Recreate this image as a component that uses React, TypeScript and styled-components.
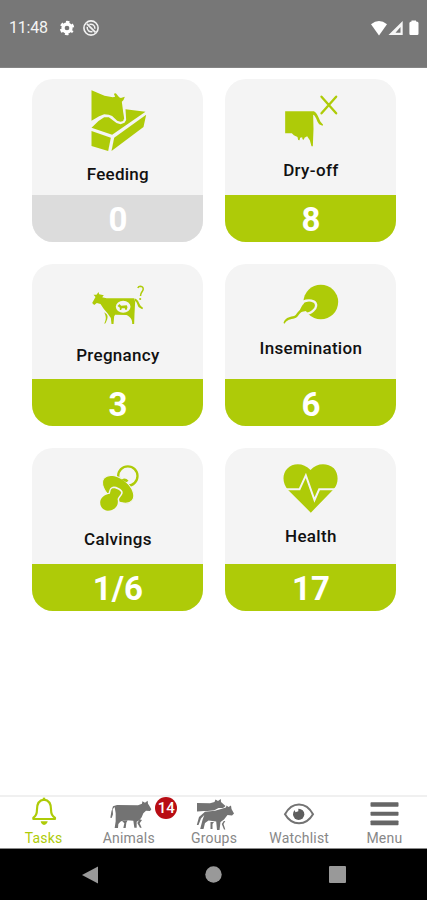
import React from "react";
import styled, { createGlobalStyle } from "styled-components";

const LIME = "#aecb08";
const GREY = "#737373";

const GlobalStyle = createGlobalStyle`
  * { box-sizing: border-box; }
  body { margin: 0; background: #fff; font-family: Roboto, "Liberation Sans", sans-serif; }
`;

const Screen = styled.div`
  display: flex;
  flex-direction: column;
  width: 427px;
  height: 900px;
  overflow: hidden;
  background: #fff;
`;

const StatusBar = styled.header`
  display: flex;
  align-items: flex-start;
  justify-content: space-between;
  height: 68px;
  padding: 19px 7px 0 9px;
  background: #777;
  border-bottom: 1px solid #858585;
  color: #fff;
`;

const StatusGroup = styled.div`
  display: flex;
  align-items: center;
  height: 17px;
`;

const Clock = styled.span`
  width: 50px;
  font-size: 16px;
  line-height: 17px;
  letter-spacing: -0.2px;
  color: #f4f4f4;
`;

const Board = styled.main`
  display: grid;
  flex: 1;
  grid-template-columns: 171px 171px;
  grid-auto-rows: 162.5px;
  gap: 22px;
  align-content: start;
  padding: 11px 0 0 32.4px;
`;

const Card = styled.section`
  display: flex;
  flex-direction: column;
  overflow: hidden;
  border-radius: 21px;
  background: #f4f4f4;
`;

const CardTop = styled.div`
  display: flex;
  flex: none;
  flex-direction: column;
  align-items: center;
  height: 115.6px;
`;

const IconSlot = styled.div<{ $height: number }>`
  flex: none;
  height: ${(p) => p.$height}px;
  svg { display: block; overflow: visible; }
`;

const CardLabel = styled.h2<{ $spacing: number }>`
  margin: 0;
  font-size: 17px;
  font-weight: 500;
  line-height: 20px;
  letter-spacing: ${(p) => p.$spacing}px;
  color: #111;
`;

const Count = styled.div<{ $empty: boolean }>`
  flex: 1;
  padding-top: 4.5px;
  background: ${(p) => (p.$empty ? "#dcdcdc" : LIME)};
  color: #fff;
  font-size: 33px;
  font-weight: 700;
  line-height: 42px;
  text-align: center;
`;

const TabBar = styled.nav`
  display: grid;
  grid-template-columns: repeat(5, 1fr);
  height: 54px;
  padding-left: 1px;
  border-top: 2px solid #f0f0f0;
  border-bottom: 1px solid #8a8a8a;
`;

const Tab = styled.div<{ $active?: boolean }>`
  position: relative;
  display: flex;
  flex-direction: column;
  align-items: center;
  color: ${(p) => (p.$active ? LIME : GREY)};
  svg { display: block; overflow: visible; }
`;

const TabLabel = styled.span<{ $active: boolean }>`
  font-size: 14px;
  line-height: 16px;
  letter-spacing: 0.2px;
  color: ${(p) => (p.$active ? LIME : "#878787")};
`;

const Badge = styled.span`
  position: absolute;
  top: 0;
  left: 69px;
  width: 22px;
  height: 22px;
  border-radius: 50%;
  background: #b80d14;
  color: #fff;
  font-size: 15px;
  font-weight: 500;
  line-height: 23px;
  text-align: center;
`;

const SystemBar = styled.footer`
  display: grid;
  grid-template-columns: 1fr 1fr 1fr;
  align-items: center;
  justify-items: center;
  height: 51px;
  padding: 0 28px 0 29px;
  background: #000;
`;

const CardSvg = ({ children }: { children: React.ReactNode }) => (
  <svg width="66" height="75" viewBox="179.5 25 198 225" fill={LIME}>{children}</svg>
);

const FeedingIcon = () => (
  <CardSvg>
    <path d="M199 59 L238 75 L263 80 L270 78 L266 69 L272 68 L282 80 L287 82 L299 78 L295 88 L290 93 L294 124 L297 143 L294 151 L286 153 L276 150 L261 136 L251 132 L237 131 L222 137 L199 150 Z" />
    <path d="M301 116 L361 123 L261 192 L199 171 L220 151 L237 140 L251 140 L274 157 L286 161 L298 156 L303 148 Z" />
    <path d="M199 181 L257 201 L249 241 L199 226 Z" />
    <path d="M363 132 L355 169 L259 241 L267 201 Z" />
  </CardSvg>
);

const DryOffIcon = () => (
  <CardSvg>
    <path d="M201 122 H287 C297 126 302 143 307 153 L315 162 L313 165 L303 161 L298 153 C293 140 289 132 285 132 L286 175 L284 227 H280 L275 209 L267 197 L259 201 L257 207 L253 206 L252 200 L246 201 L244 209 L240 208 L238 199 L227 194 L221 188 L201 188 Z" />
    <path d="M310 78 L354 128 M354 78 L310 128" fill="none" stroke={LIME} strokeWidth="7" strokeLinecap="round" />
  </CardSvg>
);

const PregnancyIcon = () => (
  <CardSvg>
    <path d="M201 142 L211 124 L205 117 L214 117 L220 109 L222 116 L236 119 L231 125 L244 128 H326 L330 138 L328 175 L327 205 H321 C322 193 317 184 304 178 L270 177 L267 182 L265 205 H259 L257 187 L247 173 L236 160 L226 145 L215 142 L207 148 Z" />
    <path d="M237 170 C249 177 251 184 241 203 L237 204 C245 190 242 180 237 170 Z" />
    <path d="M328 128 C341 132 341 145 347 151 L354 157 L351 161 L341 155 C336 147 336 138 328 135 Z" />
    <ellipse cx="294" cy="153" rx="22" ry="18" fill="#f4f4f4" />
    <path d="M277 151 L283 145 L288 150 L305 149 L307 155 L304 163 H301 L299 158 H290 L288 163 H284 L284 156 Z" />
    <path d="M338 97 Q340 92 346 92 Q355 93 354 101 C353 109 346 108 346 121" fill="none" stroke={LIME} strokeWidth="4.6" />
    <circle cx="345" cy="130" r="3.2" />
  </CardSvg>
);

const InseminationIcon = () => (
  <CardSvg>
    <circle cx="308" cy="139" r="52" />
    <path d="M248 150 C252 134 273 131 286 137 C299 144 294 158 286 164 C277 173 262 176 251 174" fill="none" stroke="#f4f4f4" strokeWidth="7" />
    <path d="M250 153 C256 140 270 138 280 142 C289 147 286 156 280 161 C271 168 258 165 249 170 C239 178 240 187 225 189 C211 191 205 195 199 204 L196 202 C200 188 212 184 224 182 C235 180 236 170 245 163 Z" />
  </CardSvg>
);

const PacifierIcon = () => (
  <CardSvg>
    <circle cx="308" cy="109" r="29" fill="none" stroke={LIME} strokeWidth="7" />
    <ellipse cx="279" cy="149" rx="54" ry="32" transform="rotate(38 279 149)" stroke="#f4f4f4" strokeWidth="3" />
    <path d="M289 120 Q300 111 310 123 L304 128 Z" />
    <path d="M254 162 C257 155 255 149 262 146 C270 143 290 153 288 160 C286 167 280 170 277 178 C282 197 269 213 248 213 C231 212 222 198 226 182 C230 170 242 164 254 162 Z" stroke="#f4f4f4" strokeWidth="9" paintOrder="stroke" />
  </CardSvg>
);

const HeartIcon = () => (
  <CardSvg>
    <path d="M277 91 C257 69 225 68 207 87 C191 104 193 131 209 150 L278 219 L347 148 C362 131 362 103 347 86 C327 68 296 69 277 91 Z" />
    <path d="M190 149 H244 L263 107 L289 181 L303 149 H366" fill="none" stroke="#f4f4f4" strokeWidth="6" strokeLinejoin="miter" />
  </CardSvg>
);

const BellIcon = () => (
  <svg width="26" height="33" viewBox="91 36 78 99" fill="none" stroke="currentColor" strokeWidth="6.5">
    <path d="M130 44 C113 46 109 58 109 73 C109 88 106 94 98 98 V102 H163 V98 C153 94 151 87 151 73 C151 57 146 46 130 44 Z" strokeLinejoin="round" />
    <path d="M130 38 V46" strokeWidth="7" />
    <path d="M120 109 H141 Q139 119 130 120 Q122 119 120 109 Z" fill="currentColor" stroke="none" />
  </svg>
);

const CowIcon = () => (
  <svg width="42" height="33" viewBox="324 36 126 99" fill="currentColor">
    <path d="M339 64 L351 60 L414 61 L426 56 L427 49 L435 53 L443 47 L444 56 L447 61 L454 73 L450 78 L438 77 L430 85 L425 97 L418 106 L410 110 L410 128 L403 128 L400 107 L371 105 L361 110 L355 117 L354 129 H344 L347 109 L347 85 L344 66 L338 73 L339 88 L335 99 L331 98 L334 80 Z" />
    <path d="M364 106 H383 L379 113 L377 129 H370 L373 115 Z M419 103 L412 114 L420 128 H425 L419 115 L426 105 Z" />
  </svg>
);

const HerdIcon = () => (
  <svg width="40" height="33" viewBox="195 797 40 33" fill="currentColor">
    <path d="M198 803 L211 803.2 L215.5 802 L216.5 799.5 L219 801 L221.8 799 L222 802 L226.5 806 L224.5 808 L219.5 808 L213 811.5 L205 811 L198 811.5 Z" />
    <path
      d="M206 811.8 L216 810.8 L222 809 L227 807.5 L227.5 805.5 L229.5 807 L232 805.5 L232.5 809 L235 813.5 L233 815.5 L228.5 815 L225 819.5 L221.5 822 L220.5 830 H218 L217.2 821.5 L209.5 820.5 L206 823 L204.5 829 H201.2 L203.5 820 L205.3 815 L202 818.5 L199.5 825 H197.8 L200 817 Z"
      stroke="#fff"
      strokeWidth="1.2"
      paintOrder="stroke"
    />
    <path d="M224.8 821 L222.8 824 L225 829.5 H226.3 L224.5 824 L226.3 821 Z M211.5 822 H215 L213.5 824 V829 H211.5 Z" />
  </svg>
);

const EyeIcon = () => (
  <svg width="30" height="33" viewBox="215 36 90 99">
    <path d="M218 88 C239 49 281 49 302 88 C281 124 239 124 218 88 Z" fill="none" stroke="currentColor" strokeWidth="6" />
    <circle cx="259" cy="88" r="17" fill="#5e5e5e" />
    <path d="M247 71 L258 70 L258 79 L249 82 Z" fill="#fff" />
  </svg>
);

const MenuIcon = () => (
  <svg width="28" height="33" viewBox="-0.5 0 28 33" fill="#666">
    <rect y="5.2" width="28" height="4.6" rx="0.7" />
    <rect y="14.8" width="28" height="4" rx="0.7" />
    <rect y="23.6" width="28" height="4.6" rx="0.7" />
  </svg>
);

const GearIcon = () => (
  <svg width="16" height="16" viewBox="0 0 16 16" fill="none" stroke="#fff">
    <circle cx="8" cy="8" r="4" strokeWidth="3.3" />
    <circle cx="8" cy="8" r="6" strokeWidth="2.4" strokeDasharray="3.3 2.983" strokeDashoffset="1.6" transform="rotate(30 8 8)" />
  </svg>
);

const SyncOffIcon = () => (
  <svg width="16" height="16" viewBox="0 0 16 16" fill="none" stroke="#f2f2f2">
    <circle cx="8" cy="8" r="7.1" strokeWidth="1.6" />
    <path d="M4 3.8 L12.5 12.3" strokeWidth="1.8" />
    <path d="M6.3 4.4 C9.5 3.5 12 5.5 11.9 8.7 M4.2 6.8 C3.8 10.5 6.5 12.2 9.5 11.5" strokeWidth="1.5" />
  </svg>
);

const SignalIcons = () => (
  <svg width="50" height="16" viewBox="-0.5 0 50 16" fill="#fff">
    <path d="M.5 4.3 Q8.5 -2.1 16.5 4.3 L8.5 15.5 Z" />
    <path d="M32.2 1 V15 H18 Z M30 7 L25 12.8 H30 Z" fill="#f6f6f6" fillRule="evenodd" />
    <path d="M41 1.5 V.5 H45.5 V1.5 H46 Q48 1.6 48 3 V13.8 Q48 15 46.8 15 H40 Q38.9 15 38.9 13.8 V3 Q39 1.5 41 1.5 Z" />
  </svg>
);

const IconGap = styled.span`
  width: 8px;
`;

const cards = [
  { label: "Feeding", count: "0", icon: <FeedingIcon />, slot: 84.5, spacing: 0.25 },
  { label: "Dry-off", count: "8", icon: <DryOffIcon />, slot: 81.4, spacing: 0.35 },
  { label: "Pregnancy", count: "3", icon: <PregnancyIcon />, slot: 81.4, spacing: 0.3 },
  { label: "Insemination", count: "6", icon: <InseminationIcon />, slot: 74.4, spacing: 0.3 },
  { label: "Calvings", count: "1/6", icon: <PacifierIcon />, slot: 81, spacing: 0.3 },
  { label: "Health", count: "17", icon: <HeartIcon />, slot: 78, spacing: 0.3 },
];

const tabs = [
  { label: "Tasks", icon: <BellIcon /> },
  { label: "Animals", icon: <CowIcon />, badge: "14" },
  { label: "Groups", icon: <HerdIcon /> },
  { label: "Watchlist", icon: <EyeIcon /> },
  { label: "Menu", icon: <MenuIcon /> },
];

export default function App() {
  return (
    <Screen>
      <GlobalStyle />
      <StatusBar>
        <StatusGroup>
          <Clock>11:48</Clock>
          <GearIcon />
          <IconGap />
          <SyncOffIcon />
        </StatusGroup>
        <StatusGroup><SignalIcons /></StatusGroup>
      </StatusBar>
      <Board>
        {cards.map((card) => (
          <Card key={card.label}>
            <CardTop>
              <IconSlot $height={card.slot}>{card.icon}</IconSlot>
              <CardLabel $spacing={card.spacing}>{card.label}</CardLabel>
            </CardTop>
            <Count $empty={card.count === "0"}>{card.count}</Count>
          </Card>
        ))}
      </Board>
      <TabBar>
        {tabs.map((tab, i) => (
          <Tab key={tab.label} $active={i === 0}>
            {tab.icon}
            <TabLabel $active={i === 0}>{tab.label}</TabLabel>
            {tab.badge && <Badge>{tab.badge}</Badge>}
          </Tab>
        ))}
      </TabBar>
      <SystemBar>
        <svg width="17" height="18" fill="#999"><path d="M0 9 L16 .5 V17.5 Z" /></svg>
        <svg width="17" height="17" fill="#999"><circle cx="8.5" cy="8.5" r="8.2" /></svg>
        <svg width="17" height="17" fill="#999"><rect width="17" height="17" rx="1" /></svg>
      </SystemBar>
    </Screen>
  );
}
